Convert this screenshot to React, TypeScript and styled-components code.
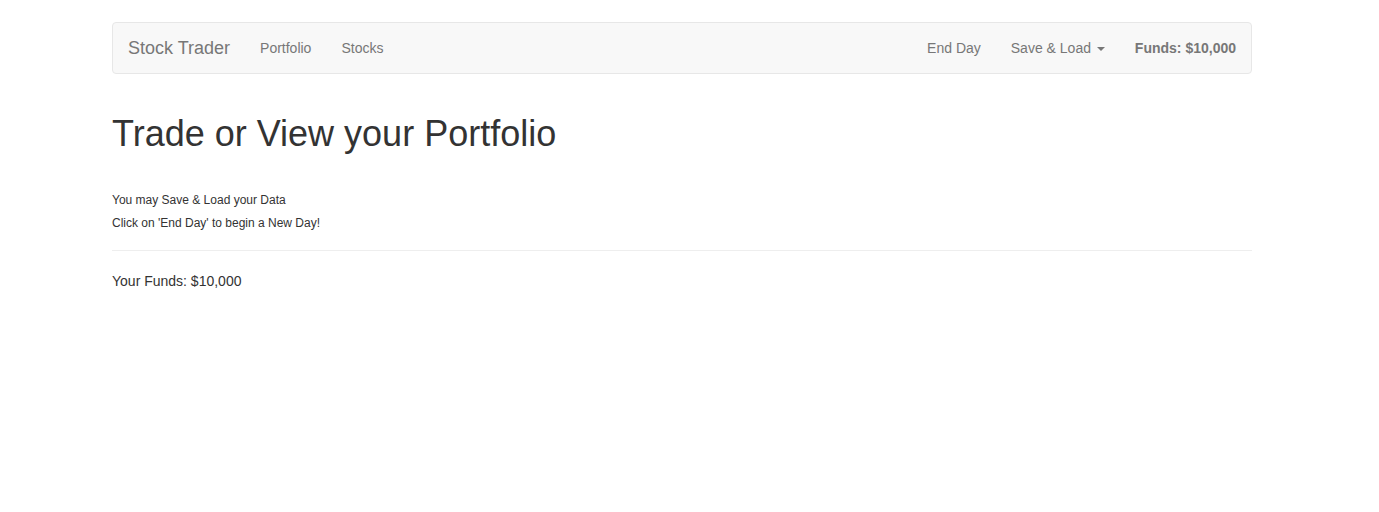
import React from "react";
import styled, { createGlobalStyle } from "styled-components";

const Global = createGlobalStyle`
  html, body { margin: 0; padding: 0; background: #fff; }
  body {
    font-family: "Liberation Sans", Arial, Helvetica, sans-serif;
    font-size: 14px;
    line-height: 1.42857143;
    color: #333;
  }
  * { box-sizing: border-box; }
`;

const Container = styled.div`
  width: 1140px;
  margin-left: 112px;
  padding-top: 22px;
`;

const Navbar = styled.nav`
  display: flex;
  align-items: stretch;
  min-height: 52px;
  background: #f8f8f8;
  border: 1px solid #e7e7e7;
  border-radius: 4px;
  margin-bottom: 20px;
`;

const Brand = styled.a`
  display: block;
  padding: 15px;
  font-size: 18px;
  line-height: 20px;
  height: 50px;
  color: #777;
  text-decoration: none;
`;

const NavList = styled.ul<{ $right?: boolean }>`
  display: flex;
  list-style: none;
  margin: 0;
  padding: 0;
  margin-left: ${(p) => (p.$right ? "auto" : "0")};
`;

const NavLink = styled.a`
  display: block;
  padding: 15px;
  line-height: 20px;
  color: #777;
  text-decoration: none;
  font-size: 14px;
`;

const Caret = styled.span`
  display: inline-block;
  width: 0;
  height: 0;
  margin-left: 2px;
  vertical-align: middle;
  border-top: 4px solid #777;
  border-right: 4px solid transparent;
  border-left: 4px solid transparent;
`;

const NavText = styled.p`
  margin: 15px;
  line-height: 20px;
  color: #777;
  font-weight: bold;
`;

const Title = styled.h1`
  font-size: 36px;
  font-weight: 500;
  line-height: 1.1;
  margin: 40px 0 40px;
  color: #333;
`;

const Note = styled.h6`
  font-size: 12px;
  font-weight: 500;
  line-height: 1.1;
  margin: 10px 0;
  color: #333;
`;

const Rule = styled.hr`
  margin: 20px 0;
  border: 0;
  border-top: 1px solid #eee;
`;

const Funds = styled.p`
  margin: 0 0 10px;
  font-size: 14px;
`;

export default function App() {
  return (
    <>
      <Global />
      <Container>
        <Navbar>
          <Brand href="#">Stock Trader</Brand>
          <NavList>
            <li><NavLink href="#">Portfolio</NavLink></li>
            <li><NavLink href="#">Stocks</NavLink></li>
          </NavList>
          <NavList $right>
            <li><NavLink href="#">End Day</NavLink></li>
            <li><NavLink href="#">Save &amp; Load <Caret /></NavLink></li>
            <li><NavText>Funds: $10,000</NavText></li>
          </NavList>
        </Navbar>
        <Title>Trade or View your Portfolio</Title>
        <Note>You may Save &amp; Load your Data</Note>
        <Note>Click on 'End Day' to begin a New Day!</Note>
        <Rule />
        <Funds>Your Funds: $10,000</Funds>
      </Container>
    </>
  );
}
